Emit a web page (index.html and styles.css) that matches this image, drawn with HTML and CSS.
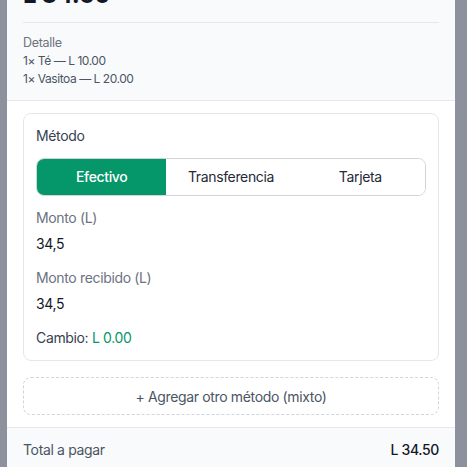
FILE: index.html
```html
<!DOCTYPE html>
<html lang="es">
<head>
<meta charset="utf-8">
<link rel="stylesheet" href="styles.css">
</head>
<body>
<div class="backdrop">
  <div class="modal">
    <div class="head">
      <div class="grand">L 34.50</div>
      <div class="divider"></div>
      <div class="detail">
        <div class="detail-title">Detalle</div>
        <div class="detail-line">1× Té — L 10.00</div>
        <div class="detail-line">1× Vasitoa — L 20.00</div>
      </div>
    </div>
    <div class="body">
      <div class="card">
        <div class="card-title">Método</div>
        <div class="seg">
          <button class="seg-btn active">Efectivo</button>
          <button class="seg-btn">Transferencia</button>
          <button class="seg-btn">Tarjeta</button>
        </div>
        <div class="field">
          <div class="label">Monto (L)</div>
          <div class="value">34,5</div>
        </div>
        <div class="field">
          <div class="label">Monto recibido (L)</div>
          <div class="value">34,5</div>
        </div>
        <div class="change">Cambio: <span class="green">L 0.00</span></div>
      </div>
      <button class="add">+ Agregar otro método (mixto)</button>
    </div>
    <div class="foot">
      <span class="foot-label">Total a pagar</span>
      <span class="foot-total">L 34.50</span>
    </div>
  </div>
</div>
</body>
</html>
```
FILE: styles.css
```css
* { box-sizing: border-box; }
html, body { margin: 0; padding: 0; }
body {
  font-family: Inter, "Noto Sans", sans-serif;
  letter-spacing: -0.35px;
  background: #8c919d;
  height: 467px;
  overflow: hidden;
}
.backdrop {
  padding-left: 7px;
}
.modal {
  width: 448px;
  background: #ffffff;
  margin-top: -21px;
}
.head {
  background: #f9fafb;
  border-bottom: 1px solid #e5e7eb;
  padding: 0 16px 12px;
}
.grand {
  font-size: 24px;
  line-height: 32px;
  font-weight: 700;
  color: #111827;
}
.divider {
  height: 1px;
  background: #e5e7eb;
  margin-top: 11px;
}
.detail {
  padding-top: 11px;
  font-size: 12px;
  line-height: 18px;
  letter-spacing: -0.45px;
}
.detail-title {
  color: #6b7280;
  font-size: 12.5px;
  letter-spacing: -0.3px;
}
.detail-line {
  color: #4b5563;
}
.body {
  padding: 12px 16px;
}
.card {
  border: 1px solid #e5e7eb;
  border-radius: 8px;
  padding: 12px;
}
.card-title {
  font-size: 14px;
  line-height: 20px;
  color: #374151;
}
.seg {
  margin-top: 12px;
  display: grid;
  grid-template-columns: 1fr 1fr 1fr;
  border: 1px solid #d1d5db;
  border-radius: 8px;
  overflow: hidden;
}
.seg-btn {
  font-family: inherit;
  letter-spacing: inherit;
  font-size: 14px;
  line-height: 20px;
  padding: 8px 0;
  border: none;
  background: #ffffff;
  color: #1f2937;
  font-weight: 400;
}
.seg-btn.active {
  background: #059669;
  color: #ffffff;
  font-weight: 500;
}
.field {
  margin-top: 12px;
}
.field + .field {
  margin-top: 14px;
}
.label {
  font-size: 14px;
  line-height: 20px;
  color: #6b7280;
}
.value {
  margin-top: 6px;
  font-size: 14px;
  line-height: 20px;
  color: #111827;
}
.change {
  margin-top: 14px;
  font-size: 14px;
  line-height: 20px;
  color: #374151;
}
.green {
  color: #059669;
}
.add {
  display: block;
  width: 100%;
  margin-top: 16px;
  height: 38px;
  border: 1px dashed #d1d5db;
  border-radius: 8px;
  background: #ffffff;
  font-family: inherit;
  letter-spacing: inherit;
  font-size: 14px;
  color: #4b5563;
}
.foot {
  background: #f9fafb;
  border-top: 1px solid #e5e7eb;
  padding: 12px 16px;
  display: flex;
  justify-content: space-between;
  font-size: 14px;
  line-height: 20px;
}
.foot-label { color: #4b5563; }
.foot-total { color: #111827; font-weight: 500; }
```
